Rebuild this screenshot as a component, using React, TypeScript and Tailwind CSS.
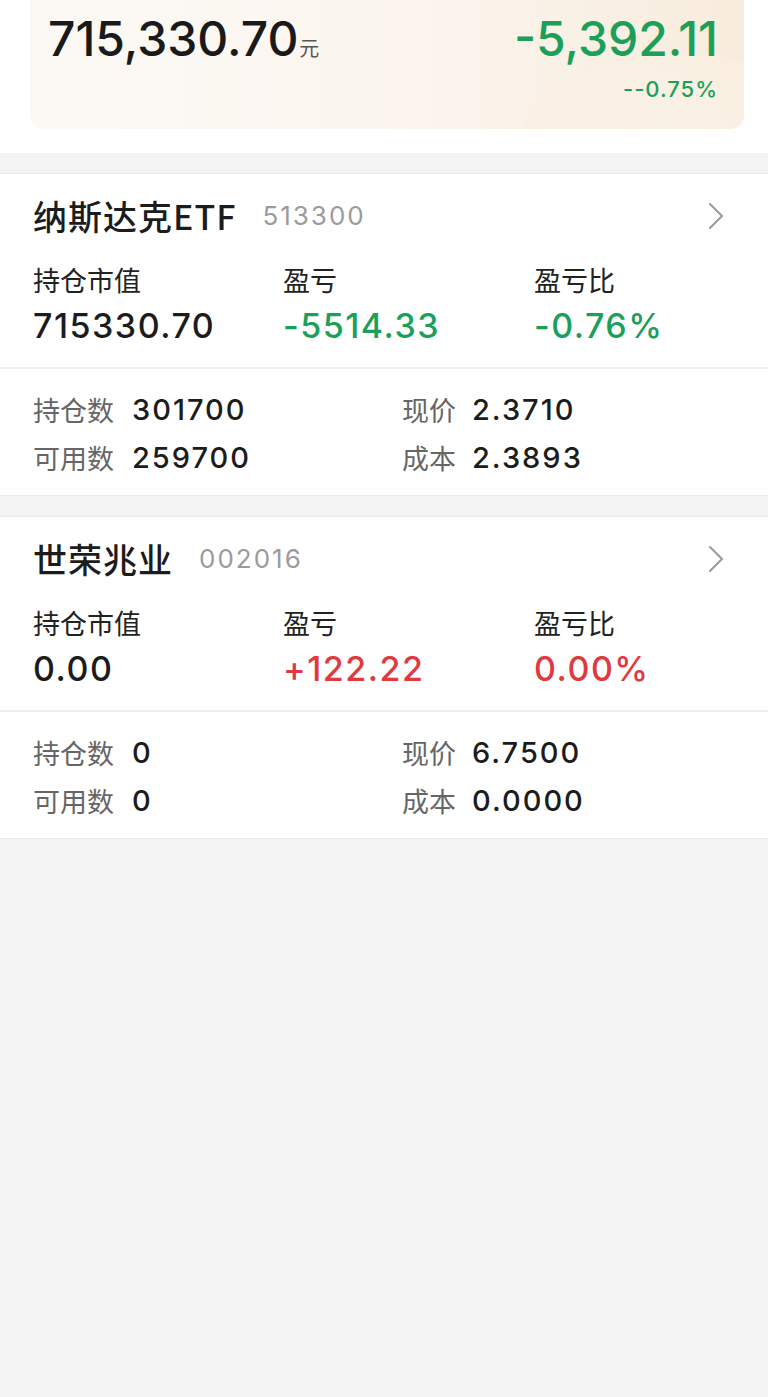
import React from "react";

const LATIN = "font-['Inter','Noto_Sans_CJK_SC',sans-serif]";
const CJK = "font-['Noto_Sans_CJK_SC',sans-serif]";

function Chevron() {
  return (
    <svg width="16" height="28" viewBox="0 0 16 28" fill="none">
      <polyline points="2,2 14,14 2,26" stroke="#9a9a9a" strokeWidth="2" strokeLinecap="round" strokeLinejoin="round" />
    </svg>
  );
}

type Holding = {
  name: string;
  code: string;
  value: string;
  pl: string;
  plr: string;
  up: boolean;
  qty: string;
  avail: string;
  price: string;
  cost: string;
};

function Card({ h }: { h: Holding }) {
  const color = h.up ? "text-[#e0393f]" : "text-[#1ba05a]";
  return (
    <div className="bg-white border-y border-[#ebebeb]">
      <div className="pl-[33px] pr-[44px] pb-[17px]">
        <div className="h-[84px] flex items-center">
          <span className={`${CJK} text-[34px] leading-none font-medium text-[#1c1c1c] tracking-[1px]`}>{h.name}</span>
          <span className={`${LATIN} ml-[26px] text-[26px] leading-none text-[#9b9b9b] tracking-[2px]`}>{h.code}</span>
          <div className="ml-auto flex items-center">
            <Chevron />
          </div>
        </div>
        <div className="flex h-[46px] items-center -mt-[2px]">
          <div className={`${CJK} w-[250px] text-[27px] leading-none text-[#222]`}>持仓市值</div>
          <div className={`${CJK} w-[251px] text-[27px] leading-none text-[#222]`}>盈亏</div>
          <div className={`${CJK} text-[27px] leading-none text-[#222]`}>盈亏比</div>
        </div>
        <div className="flex h-[48px] items-center">
          <div className={`${LATIN} w-[250px] text-[34px] leading-none font-medium text-[#1c1c1c] tracking-[1.5px]`}>{h.value}</div>
          <div className={`${LATIN} w-[251px] text-[34px] leading-none font-medium ${color} tracking-[1.5px]`}>{h.pl}</div>
          <div className={`${LATIN} text-[34px] leading-none font-medium ${color} tracking-[1.5px]`}>{h.plr}</div>
        </div>
      </div>
      <div className="h-[2px] bg-[#ededed]" />
      <div className="pl-[33px] pt-[16px] pb-[14px]">
        {[
          ["持仓数", h.qty, "现价", h.price],
          ["可用数", h.avail, "成本", h.cost],
        ].map((r, i) => (
          <div key={i} className="flex h-[48px] items-center">
            <div className="w-[369px] flex items-center gap-[18px]">
              <span className={`${CJK} text-[27px] leading-none text-[#666]`}>{r[0]}</span>
              <span className={`${LATIN} text-[29px] leading-none font-medium text-[#1c1c1c] tracking-[2px]`}>{r[1]}</span>
            </div>
            <div className="flex items-center gap-[16px]">
              <span className={`${CJK} text-[27px] leading-none text-[#666]`}>{r[2]}</span>
              <span className={`${LATIN} text-[29px] leading-none font-medium text-[#1c1c1c] tracking-[2px]`}>{r[3]}</span>
            </div>
          </div>
        ))}
      </div>
    </div>
  );
}

export default function App() {
  const holdings: Holding[] = [
    {
      name: "纳斯达克ETF",
      code: "513300",
      value: "715330.70",
      pl: "-5514.33",
      plr: "-0.76%",
      up: false,
      qty: "301700",
      avail: "259700",
      price: "2.3710",
      cost: "2.3893",
    },
    {
      name: "世荣兆业",
      code: "002016",
      value: "0.00",
      pl: "+122.22",
      plr: "0.00%",
      up: true,
      qty: "0",
      avail: "0",
      price: "6.7500",
      cost: "0.0000",
    },
  ];
  return (
    <div className="w-[768px] min-h-[1397px] bg-[#f3f3f3]">
      <div className="bg-white h-[153px] pl-[30px] pr-[24px]">
        <div className="relative h-[129px] rounded-b-[14px] overflow-hidden bg-[linear-gradient(90deg,#fcf9f5_0%,#fbf5ee_55%,#f8ecdc_100%)]">
          <div className="absolute left-[480px] top-[55px] w-[320px] h-[260px] rounded-full bg-[radial-gradient(circle,#fbf3e9_0%,#faf0e3_60%,#f9eddf_100%)] opacity-70" />
          <div className="relative flex justify-between pl-[18px] pr-[26px] pt-[15px]">
            <div className="flex items-baseline">
              <span className={`${LATIN} text-[48px] leading-none font-medium text-[#1a1a1a]`}>715,330.70</span>
              <span className={`${CJK} text-[20px] leading-none text-[#555] ml-[1px]`}>元</span>
            </div>
            <div className="flex flex-col items-end">
              <span className={`${LATIN} text-[48px] leading-none font-medium text-[#1ba05a]`}>-5,392.11</span>
              <span className={`${LATIN} mt-[15px] text-[22px] leading-none font-medium text-[#1ba05a] tracking-[1px]`}>--0.75%</span>
            </div>
          </div>
        </div>
      </div>
      <div className="h-[20px]" />
      <Card h={holdings[0]} />
      <div className="h-[20px]" />
      <Card h={holdings[1]} />
    </div>
  );
}
